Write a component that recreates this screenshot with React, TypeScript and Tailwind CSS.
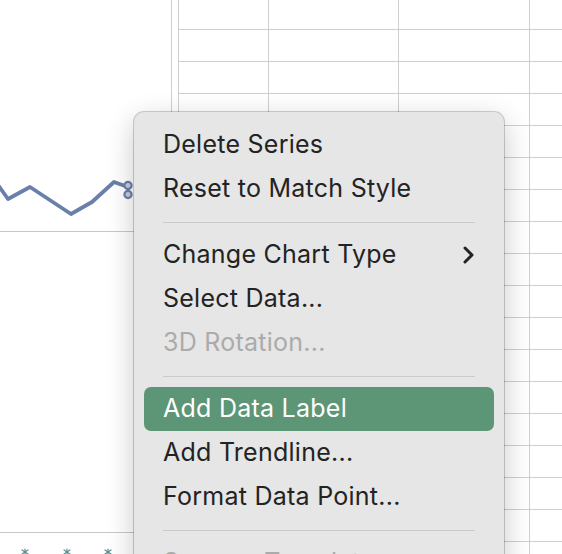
import { Fragment } from "react";

type Item = { label: string; disabled?: boolean; active?: boolean; submenu?: boolean } | "sep";

const ITEMS: Item[] = [
  { label: "Delete Series" },
  { label: "Reset to Match Style" },
  "sep",
  { label: "Change Chart Type", submenu: true },
  { label: "Select Data..." },
  { label: "3D Rotation...", disabled: true },
  "sep",
  { label: "Add Data Label", active: true },
  { label: "Add Trendline..." },
  { label: "Format Data Point..." },
  "sep",
  { label: "Save as Template...", disabled: true },
];

const ROWS = Array.from({ length: 18 });

export default function App() {
  return (
    <main className="relative h-[554px] w-[562px] overflow-hidden bg-white font-['Inter',sans-serif]">
      <div className="flex h-full">
        <ChartPanel />
        <div className="w-[6px] shrink-0" />
        <Sheet />
      </div>
      <ContextMenu />
    </main>
  );
}

function ChartPanel() {
  return (
    <div className="h-full w-[172px] shrink-0 border-r border-[#cfcfcf]">
      <svg width="171" height="554" viewBox="0 0 171 554">
        <line x1="0" y1="231.5" x2="171" y2="231.5" stroke="#c8c8c8" strokeWidth="1.2" />
        <line x1="0" y1="532.5" x2="171" y2="532.5" stroke="#c8c8c8" strokeWidth="1.2" />
        <polyline
          points="-2,185 8,199 30,187 71,214 92,202 114,182 128,187"
          fill="none"
          stroke="#6a7fa9"
          strokeWidth="3.8"
          strokeLinejoin="round"
        />
        <circle cx="128" cy="185.5" r="3.6" fill="#c9cdd6" stroke="#6a7fa9" strokeWidth="2.2" />
        <circle cx="128" cy="194.5" r="3.6" fill="#c9cdd6" stroke="#6a7fa9" strokeWidth="2.2" />
        {[25, 67, 108].map((x) => (
          <g key={x} stroke="#5e8a8c" strokeWidth="1.2" strokeLinecap="round">
            <line x1={x} y1="549" x2={x} y2="555" />
            <line x1={x - 3} y1="550" x2={x + 3} y2="554" />
            <line x1={x + 3} y1="550" x2={x - 3} y2="554" />
          </g>
        ))}
      </svg>
    </div>
  );
}

function Sheet() {
  return (
    <div className="h-full flex-1 border-l border-[#cfcfcf]">
      {ROWS.map((_, i) => (
        <div key={i} className={`flex border-b border-[#cfcfcf] ${i === 0 ? "h-[30px]" : "h-[32px]"}`}>
          <div className="w-[90px] shrink-0 border-r border-[#cfcfcf]" />
          <div className="w-[130px] shrink-0 border-r border-[#cfcfcf]" />
          <div className="w-[131px] shrink-0 border-r border-[#cfcfcf]" />
          <div className="flex-1" />
        </div>
      ))}
    </div>
  );
}

function ContextMenu() {
  return (
    <div className="absolute left-[134px] top-[112px] w-[370px] rounded-[10px] bg-[#e5e6e5] px-[10px] pt-[11px] pb-4 shadow-[0_8px_28px_rgba(0,0,0,0.22),0_0_0_1px_rgba(0,0,0,0.18)]">
      {ITEMS.map((item, i) =>
        item === "sep" ? (
          <div key={i} className="flex h-[22px] items-center px-[19px]">
            <div className="h-px w-full bg-[#c9caca]" />
          </div>
        ) : (
          <Fragment key={i}>
            <div
              className={`flex h-[44px] items-center justify-between rounded-[7px] pl-[19px] pr-[20px] text-[25px] tracking-[0.25px] ${
                item.active
                  ? "bg-[#5c9676] text-white"
                  : item.disabled
                    ? "text-[#ababab]"
                    : "text-[#232323]"
              }`}
            >
              <span>{item.label}</span>
              {item.submenu && (
                <svg width="11" height="18" viewBox="0 0 11 18">
                  <path d="M2 2 L9 9 L2 16" fill="none" stroke="#232323" strokeWidth="3" strokeLinecap="round" strokeLinejoin="round" />
                </svg>
              )}
            </div>
          </Fragment>
        ),
      )}
    </div>
  );
}
